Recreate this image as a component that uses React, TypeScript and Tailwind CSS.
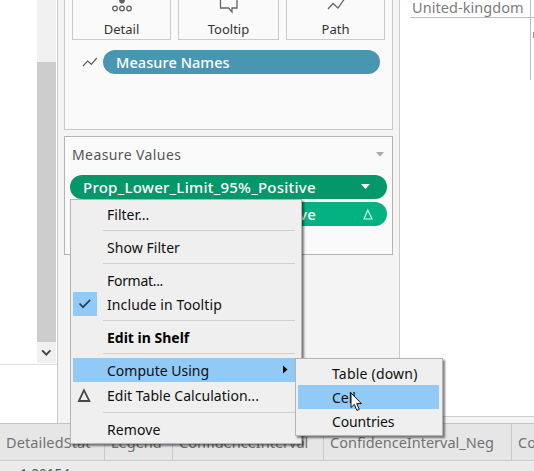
import type { ReactNode } from 'react';

function Sep() {
  return (
    <div className="flex h-[9px] items-center pl-[30px] pr-[4px]">
      <div className="h-px w-full bg-[#d2d2d2]" />
    </div>
  );
}

function Item({ children, icon, className = '' }: { children: ReactNode; icon?: ReactNode; className?: string }) {
  return (
    <div className={`flex h-6 shrink-0 items-center whitespace-nowrap ${className}`}>
      <div className="flex w-[34px] shrink-0">{icon}</div>
      {children}
    </div>
  );
}

function ContextMenu() {
  return (
    <div className="absolute left-[70px] top-[199px] h-[245px] w-[232px] border border-[#b4b4b4] bg-[#efefef] px-[2px] pt-[2px] font-['Noto_Sans',sans-serif] text-[14px] leading-[20px] text-[#101010] shadow-[2px_2px_2px_rgba(0,0,0,0.5)]">
      <Item className="pt-px">Filter...</Item>
      <Sep />
      <Item className="pt-px"><span className="tracking-[0.05px]">Show Filter</span></Item>
      <Sep />
      <Item className="pt-px"><span className="tracking-[-0.3px]">Format...</span></Item>
      <Item
        className="pt-px"
        icon={
          <div className="-mt-px flex size-6 items-center justify-center bg-[#91c9f7]">
            <svg width="14" height="12" viewBox="0 0 14 12" fill="none" stroke="#24415c" strokeWidth="1.7">
              <path d="M1.5 5.5 5 9.2l7.2-7.4" />
            </svg>
          </div>
        }
      >
        <span className="tracking-[0.1px]">Include in Tooltip</span>
      </Item>
      <Sep />
      <Item className="pt-px"><span className="font-bold text-black">Edit in Shelf</span></Item>
      <Sep />
      <Item className="mr-[4px] bg-[#91c9f7] pt-px">
        <span>Compute Using</span>
        <svg className="-mt-[2px] ml-auto mr-[7px]" width="5" height="9" viewBox="0 0 5 9"><path d="M0 0.5 4.5 4.5 0 8.5Z" fill="#000" /></svg>
      </Item>
      <Item
        className="h-[26px] pt-[2px]"
        icon={
          <svg className="-mt-[2px] ml-[4px]" width="15" height="15" viewBox="0 0 15 15" fill="none" stroke="#484848" strokeWidth="1.8">
            <path d="M7 2.2 1.9 13h10.5Z" />
          </svg>
        }
      >
        <span className="tracking-[0.03px]">Edit Table Calculation...</span>
      </Item>
      <Sep />
      <Item className="pt-px"><span className="tracking-[0.1px]">Remove</span></Item>
    </div>
  );
}

function SubMenu() {
  return (
    <div className="absolute left-[295px] top-[358px] h-[78px] w-[148px] border border-[#b4b4b4] bg-[#efefef] px-[2px] py-[2px] font-['Noto_Sans',sans-serif] text-[14px] leading-[20px] text-[#101010] shadow-[2px_2px_2px_rgba(0,0,0,0.5)]">
      <Item className="pt-px"><span className="tracking-[0.2px]">Table (down)</span></Item>
      <Item className="mr-px bg-[#91c9f7] pt-px">Cell</Item>
      <Item className="pt-px"><span className="tracking-[-0.15px]">Countries</span></Item>
    </div>
  );
}

function Trend() {
  return (
    <svg width="16" height="12" viewBox="0 0 16 12" fill="none" stroke="#5f5f5f" strokeWidth="1.2">
      <path d="M1 10 5.6 5 9.4 8.3 14.7 2" />
    </svg>
  );
}

function MarkButton({ label, icon, className }: { label: string; icon: ReactNode; className: string }) {
  return (
    <div className={`flex h-10 flex-col items-center border border-t-0 border-[#cacaca] ${className}`}>
      <div className="flex h-[19px] items-start">{icon}</div>
      <div className="text-[13px] leading-[20px] text-[#333]">{label}</div>
    </div>
  );
}

function Scrollbar() {
  return (
    <div className="flex h-[363px] w-[19px] flex-col bg-[#f0f0f0]">
      <div className="mt-[62px] h-[280px] bg-[#cdcdcd]" />
      <div className="flex flex-1 items-center justify-center">
        <svg width="11" height="8" viewBox="0 0 11 8" fill="none" stroke="#454545" strokeWidth="2"><path d="M1.2 1.4 5.3 5.6 9.4 1.4" /></svg>
      </div>
    </div>
  );
}

function Sidebar() {
  return (
    <div className="flex w-[343px] shrink-0 flex-col border-x border-[#cbcbcb] bg-[#f4f4f4] px-[6px] font-['Noto_Sans',sans-serif]">
      <div className="h-[130px] border border-t-0 border-[#c8c8c8] bg-[#fafafa] pl-[7px]">
        <div className="flex">
          <MarkButton className="w-[99px]" label="Detail" icon={
            <svg width="20" height="12" viewBox="0 0 20 12" fill="none" stroke="#606060" strokeWidth="1.3">
              <circle cx="10" cy=".6" r="2.8" fill="#606060" stroke="none" />
              <circle cx="3" cy="8.5" r="2.3" /><circle cx="10" cy="8.5" r="2.3" /><circle cx="17" cy="8.5" r="2.3" />
            </svg>} />
          <MarkButton className="ml-[7px] w-[101px]" label="Tooltip" icon={
            <svg width="20" height="14" viewBox="0 0 20 14" fill="none" stroke="#666" strokeWidth="1.3">
              <path d="M1.5-1V8h8l3.5 4V8h5V-1" />
            </svg>} />
          <MarkButton className="ml-[7px] w-[99px]" label="Path" icon={
            <svg width="18" height="12" viewBox="0 0 18 12" fill="none" stroke="#666" strokeWidth="1.3">
              <path d="M1 9 6 3.5 11 8 17-.5" />
            </svg>} />
        </div>
        <div className="mt-[10px] flex items-center pl-[10px]">
          <Trend />
          <div className="ml-[5px] h-6 w-[277px] rounded-full bg-[#4996b2] pl-[13px] text-[14.5px] leading-[25px] font-medium tracking-[0.08px] text-white">Measure Names</div>
        </div>
      </div>
      <div className="mt-[6px] h-[119px] border border-[#b4b4b4] bg-[#fafafa] pl-[5px] pr-[5px]">
        <div className="flex h-[38px] items-center justify-between pb-[3px] pl-[2px] pr-[3px] text-[14px] text-[#555]">
          <span className="tracking-[0.4px]">Measure Values</span>
          <svg width="8" height="5" viewBox="0 0 8 5"><path d="M0 0h8L4 4.5Z" fill="#a7a7a7" /></svg>
        </div>
        <div className="flex h-6 items-center justify-between rounded-full bg-[#03976a] pl-[13px] pr-[17px] text-[15px] font-medium tracking-[0.25px] text-white">
          <span>Prop_Lower_Limit_95%_Positive</span>
          <svg width="9" height="6" viewBox="0 0 9 6"><path d="M0 0h9L4.5 5Z" fill="#fff" /></svg>
        </div>
        <div className="mt-[3px] flex h-6 items-center justify-between rounded-full bg-[#03b181] pl-[13px] pr-[14px] text-[15px] font-medium tracking-[0.25px] text-white">
          <span className="w-[233px] text-right">Positive</span>
          <svg width="10" height="11" viewBox="0 0 10 11" fill="none" stroke="#d9fff3" strokeWidth="1.2"><path d="M4.8 1 1 10h8Z" /></svg>
        </div>
      </div>
    </div>
  );
}

function DataGrid() {
  return (
    <div className="h-[48px] border-t border-[#c4c4c4] bg-[#ebebeb] font-['Noto_Sans',sans-serif] text-[14.5px] text-[#727272]">
      <div className="flex h-[37px] border-b border-[#cacaca] bg-[#e6e6e6] leading-[36px] whitespace-nowrap">
        <div className="w-[105px] shrink-0 border-r border-[#cacaca] pl-[6px] tracking-[0.12px]">DetailedStat</div>
        <div className="w-[68px] shrink-0 border-r border-[#cacaca] pl-[6px]">Legend</div>
        <div className="w-[151px] shrink-0 border-r border-[#cacaca] pl-[6px]">ConfidenceInterval</div>
        <div className="w-[188px] shrink-0 border-r border-[#cacaca] pl-[6px]">ConfidenceInterval_Neg</div>
        <div className="pl-[6px]">Co</div>
      </div>
      <div className="pl-[20px] pt-[3px] text-[13.5px] leading-[20px] text-[#555]">1.00154</div>
    </div>
  );
}

export default function App() {
  return (
    <div className="relative h-[471px] w-[534px] overflow-hidden bg-white">
      <div className="flex h-[423px]">
        <div className="w-[57px] shrink-0">
          <div className="flex h-[365px] justify-end border-b border-[#dedede] pr-px">
            <Scrollbar />
          </div>
        </div>
        <Sidebar />
        <div className="flex min-w-0 flex-1 flex-col justify-between">
          <div className="ml-[10px] flex h-[80px]">
            <div className="w-[120px] shrink-0">
              <div className="h-[18px] border-b border-[#bfbfbf] pl-[2px] font-['Noto_Sans',sans-serif] text-[14.5px] leading-[14px] tracking-[0.05px] text-[#7c7c7c]">United-kingdom</div>
            </div>
            <div className="w-[4px] border-l border-[#bfbfbf]">
              <div className="h-[18px] border-b border-[#bfbfbf]" />
              <div className="ml-[2px] mt-[14px] h-[6px] w-px bg-[#a58e79]" />
            </div>
          </div>
          <div className="h-[7px] border-t border-[#cdcdcd] bg-[#f4f4f4]" />
        </div>
      </div>
      <DataGrid />
      <ContextMenu />
      <SubMenu />
      <svg className="absolute left-[350px] top-[392px]" width="13" height="20" viewBox="0 0 13 20">
        <path d="M1 1v14.5l3.3-3.1 2.6 6 2.4-1-2.6-5.8h4.7Z" fill="#fff" stroke="#111" />
      </svg>
    </div>
  );
}
